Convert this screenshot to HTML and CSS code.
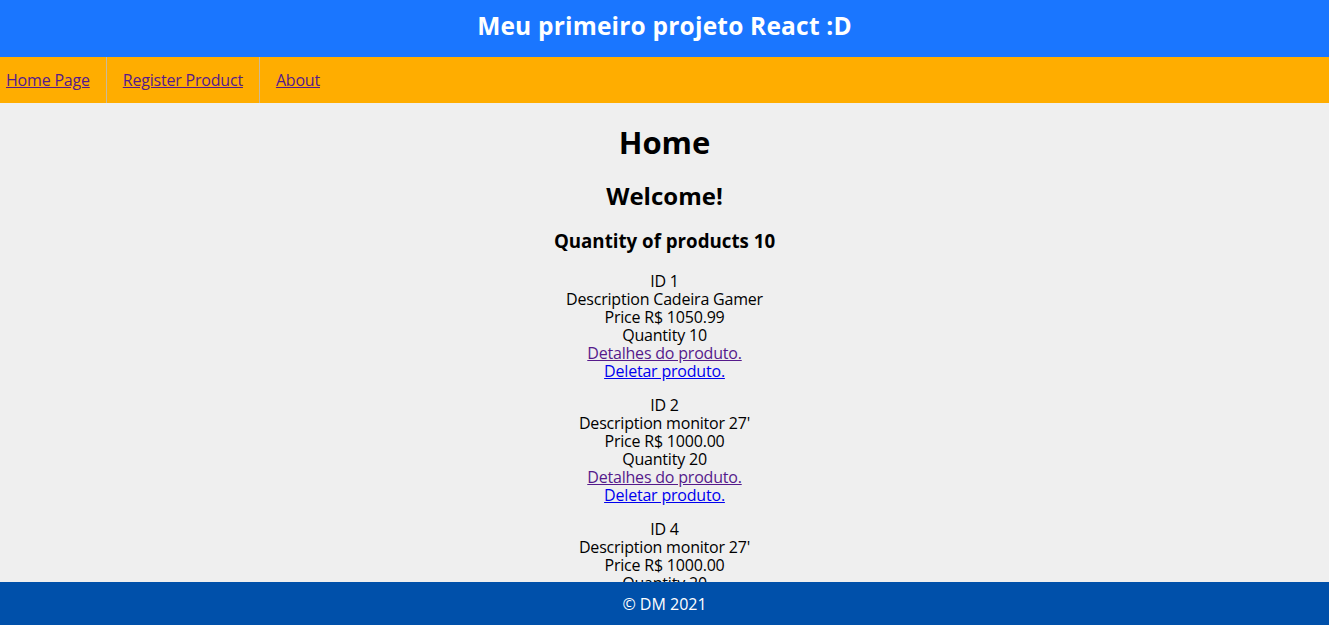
FILE: index.html
```html
<!DOCTYPE html>
<html lang="pt-BR">
<head>
<meta charset="utf-8">
<title>Meu primeiro projeto React :D</title>
<link rel="stylesheet" href="styles.css">
</head>
<body>
<header class="top">
  <h1 class="top-title">Meu primeiro projeto React :D</h1>
</header>
<nav class="menu">
  <ul class="menu-list">
    <li class="menu-item first"><a class="visited" href="#">Home Page</a></li>
    <li class="menu-item"><a class="visited" href="#">Register Product</a></li>
    <li class="menu-item"><a class="visited" href="#">About</a></li>
  </ul>
</nav>
<main class="content">
  <h1 class="h-home">Home</h1>
  <h2 class="h-welcome">Welcome!</h2>
  <h3 class="h-qty">Quantity of products 10</h3>
  <div class="product">
    <div>ID 1</div>
    <div>Description Cadeira Gamer</div>
    <div>Price R$ 1050.99</div>
    <div>Quantity 10</div>
    <div><a class="visited" href="#">Detalhes do produto.</a></div>
    <div><a class="link" href="#">Deletar produto.</a></div>
  </div>
  <div class="product">
    <div>ID 2</div>
    <div>Description monitor 27'</div>
    <div>Price R$ 1000.00</div>
    <div>Quantity 20</div>
    <div><a class="visited" href="#">Detalhes do produto.</a></div>
    <div><a class="link" href="#">Deletar produto.</a></div>
  </div>
  <div class="product">
    <div>ID 4</div>
    <div>Description monitor 27'</div>
    <div>Price R$ 1000.00</div>
    <div>Quantity 20</div>
    <div><a class="visited" href="#">Detalhes do produto.</a></div>
    <div><a class="link" href="#">Deletar produto.</a></div>
  </div>
</main>
<footer class="foot">© DM 2021</footer>
</body>
</html>
```
FILE: styles.css
```css
html, body {
  margin: 0;
  padding: 0;
}
body {
  font-family: "Open Sans", "Noto Sans", sans-serif;
  font-size: 16px;
  line-height: 18px;
  background: #efefef;
  color: #000;
  height: 625px;
  overflow: hidden;
}
.top {
  background: #1a76ff;
  height: 57px;
  box-sizing: border-box;
  padding-bottom: 6px;
  display: flex;
  align-items: center;
  justify-content: center;
}
.top-title {
  margin: 0;
  color: #fff;
  font-size: 24.5px;
  line-height: 28px;
  font-weight: 700;
  letter-spacing: 0.2px;
}
.menu {
  background: #ffad00;
  height: 46px;
}
.menu-list {
  list-style: none;
  margin: 0;
  padding: 0;
  display: flex;
  height: 100%;
}
.menu-item {
  display: flex;
  align-items: center;
  padding: 0 16px;
  border-right: 1px solid #c9b99a;
  letter-spacing: -0.2px;
}
.menu-item.first {
  padding-left: 6px;
}
.menu-item:last-child {
  border-right: none;
}
.visited {
  color: #551a8b;
}
.link {
  color: #0000ee;
}
.content {
  text-align: center;
  padding-bottom: 60px;
}
.h-home {
  font-size: 31px;
  line-height: 37px;
  margin: 21px 0 0;
}
.h-welcome {
  font-size: 24px;
  line-height: 28px;
  margin: 21px 0 0;
}
.h-qty {
  font-size: 18.72px;
  line-height: 22px;
  margin: 20px 0 0;
}
.product {
  margin-top: 16px;
  letter-spacing: -0.2px;
}
.h-qty + .product {
  margin-top: 20px;
}
.foot {
  position: fixed;
  left: 0;
  right: 0;
  bottom: 0;
  height: 43px;
  background: #0050aa;
  color: #fff;
  display: flex;
  align-items: center;
  justify-content: center;
  font-size: 16px;
}
```
